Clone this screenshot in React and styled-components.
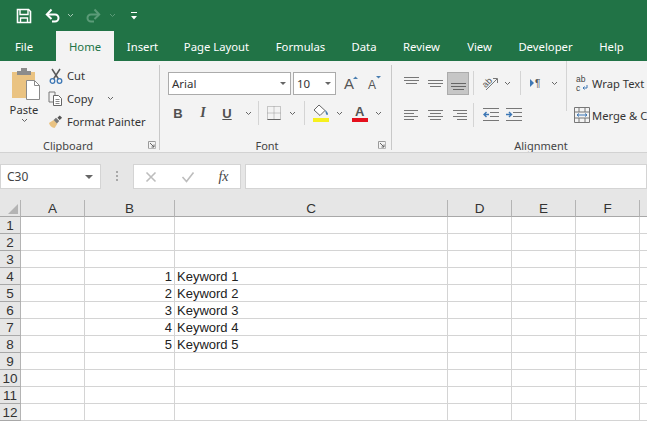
import React from 'react';
import styled, { createGlobalStyle } from 'styled-components';

const GREEN = '#217346';
const FONT = '"Noto Sans", "Open Sans", sans-serif';

const Global = createGlobalStyle`
  html, body { margin: 0; padding: 0; background: #fff; overflow: hidden; }
  body { font-family: ${FONT}; }
`;

const Window = styled.div`
  width: 647px;
  height: 421px;
  overflow: hidden;
  background: #fff;
`;

const TitleBar = styled.div`
  height: 31px;
  background: ${GREEN};
  display: flex;
  align-items: center;
`;

const Slot = styled.span`
  flex: none;
  width: ${p => p.$w}px;
  height: ${p => p.$h || 22}px;
  margin-left: ${p => p.$ml || 0}px;
  display: flex;
  align-items: center;
  justify-content: center;
  background: ${p => p.$active ? '#c6c6c6' : 'transparent'};
  outline: ${p => p.$active ? '1px solid #ababab' : 'none'};
  outline-offset: -1px;
  color: #444;
`;

const TabBar = styled.div`
  height: 30px;
  background: ${GREEN};
  display: flex;
  align-items: stretch;
`;

const Tab = styled.div`
  flex: none;
  width: ${p => p.$w}px;
  margin-right: ${p => p.$mr || 0}px;
  display: flex;
  align-items: center;
  justify-content: center;
  font-size: 11.3px;
  color: ${p => p.$active ? GREEN : '#fff'};
  background: ${p => p.$active ? '#f3f3f3' : 'transparent'};
`;

const Ribbon = styled.div`
  height: 92px;
  box-sizing: border-box;
  padding-top: 4px;
  background: #f3f3f3;
  border-bottom: 1px solid #d2d2d2;
  display: flex;
  overflow: hidden;
`;

const Group = styled.section`
  flex: none;
  width: ${p => p.$w}px;
  height: 85px;
  box-sizing: border-box;
  display: flex;
  flex-direction: column;
  border-right: ${p => p.$open ? 'none' : '1px solid #c8c8c8'};
`;

const GroupBody = styled.div`
  flex: none;
  height: 72px;
  padding-left: ${p => p.$pl || 0}px;
  display: flex;
  flex-direction: ${p => p.$col ? 'column' : 'row'};
`;

const GroupFooter = styled.div`
  flex: none;
  height: 16px;
  display: flex;
  align-items: center;
  color: #444;
  font-size: 11px;
`;

const GroupLabel = styled.span`
  flex: none;
  width: ${p => p.$w}px;
  text-align: center;
`;

const LauncherSlot = styled.span`
  flex: none;
  width: 8px;
  height: 8px;
  display: flex;
  margin-left: ${p => p.$ml}px;
`;

const PasteCol = styled.div`
  flex: none;
  width: 36px;
  margin-left: 6px;
  display: flex;
  flex-direction: column;
  align-items: center;
  color: #333;
  font-size: 11.2px;
  line-height: 16px;
  padding-top: 3px;
`;

const PasteArt = styled.span`
  display: flex;
  margin-left: 4px;
`;

const PasteText = styled.span`
  margin-top: 2px;
`;

const ClipCol = styled.div`
  margin-left: 6px;
  margin-top: -1px;
  display: flex;
  flex-direction: column;
`;

const ClipRow = styled.div`
  height: 23px;
  display: flex;
  align-items: center;
  gap: 4px;
  font-size: 11.2px;
  color: #333;
`;

const Row = styled.div`
  display: flex;
  align-items: center;
  height: ${p => p.$h}px;
  margin-top: ${p => p.$mt || 0}px;
`;

const Select = styled.div`
  flex: none;
  width: ${p => p.$w}px;
  height: 23px;
  box-sizing: border-box;
  margin-left: ${p => p.$ml || 0}px;
  background: #fff;
  border: 1px solid #ababab;
  display: flex;
  align-items: center;
  justify-content: space-between;
  padding: 0 4px 0 3px;
  font-size: 11.5px;
  color: #333;
`;

const Caret = styled.i`
  width: 0;
  height: 0;
  border-left: ${p => p.$s || 3.5}px solid transparent;
  border-right: ${p => p.$s || 3.5}px solid transparent;
  border-top: ${p => p.$s || 3.5}px solid #666;
`;

const Sep = styled.span`
  flex: none;
  width: 1px;
  height: ${p => p.$h || 24}px;
  background: #d4d4d4;
`;

const FontMark = styled.span`
  font-family: ${p => p.$serif ? '"Liberation Serif", serif' : '"Liberation Sans", sans-serif'};
  font-weight: 700;
  font-style: ${p => p.$it ? 'italic' : 'normal'};
  text-decoration: ${p => p.$un ? 'underline' : 'none'};
  font-size: ${p => p.$size || 13}px;
  line-height: 1;
  color: #505050;
`;

const TextAction = styled.div`
  flex: none;
  height: ${p => p.$h}px;
  display: flex;
  align-items: center;
  gap: 1px;
  font-size: 11.2px;
  color: #333;
  white-space: nowrap;
`;

const FormulaBar = styled.div`
  height: 47px;
  box-sizing: border-box;
  padding-top: 11px;
  background: #e6e6e6;
  display: flex;
  align-items: flex-start;
`;

const NameBox = styled.div`
  flex: none;
  width: 101px;
  height: 25px;
  box-sizing: border-box;
  background: #fff;
  border: 1px solid #d4d4d4;
  display: flex;
  align-items: center;
  justify-content: space-between;
  padding: 0 7px 0 6px;
  font-size: 12px;
  color: #444;
`;

const Grip = styled.span`
  flex: none;
  width: 2px;
  height: 10px;
  margin: 7px 15px 0 15px;
  background: repeating-linear-gradient(to bottom, #a8a8a8 0 2px, transparent 2px 4px);
`;

const FxButtons = styled.div`
  flex: none;
  width: 108px;
  height: 25px;
  box-sizing: border-box;
  background: #fff;
  border: 1px solid #d4d4d4;
  display: flex;
  align-items: center;
`;

const FxMark = styled.span`
  font-family: "Liberation Serif", serif;
  font-style: italic;
  font-size: 14px;
  color: #444;
`;

const FormulaInput = styled.div`
  flex: 1;
  height: 25px;
  box-sizing: border-box;
  margin-left: 4px;
  background: #fff;
  border: 1px solid #d4d4d4;
`;

const Sheet = styled.div`
  display: grid;
  grid-template-columns: 21px 64px 90px 273px 64px 64px 64px 64px;
  grid-auto-rows: 17px;
  font-family: "Liberation Sans", Arial, sans-serif;
  font-size: 13px;
  color: #222;
`;

const Cell = styled.div`
  box-sizing: border-box;
  border-right: 1px solid #d4d4d4;
  border-bottom: 1px solid #d4d4d4;
  padding: 0 2px;
  line-height: 18px;
  white-space: nowrap;
  overflow: hidden;
  text-align: ${p => p.$right ? 'right' : 'left'};
`;

const Head = styled.div`
  box-sizing: border-box;
  background: #e6e6e6;
  border-right: 1px solid #b4b4b4;
  border-bottom: 1px solid #a8a8a8;
  font-size: 13.5px;
  line-height: 17px;
  text-align: center;
  color: #333;
  overflow: hidden;
`;

const Corner = styled(Head)`
  position: relative;
  &::after {
    content: '';
    position: absolute;
    right: 2px;
    bottom: 2px;
    border-left: 10px solid transparent;
    border-bottom: 10px solid #b4b4b4;
  }
`;

const Svg = ({ w = 16, h = 16, children, ...rest }) => (
  <svg width={w} height={h} viewBox={`0 0 ${w} ${h}`} fill="none" {...rest}>{children}</svg>
);

const Chevron = ({ color = '#666' }) => (
  <Svg w={7} h={5}><path d="M1 1l2.5 2.5L6 1" stroke={color} strokeWidth="1" /></Svg>
);

const Launcher = ({ ml }) => (
  <LauncherSlot $ml={ml}>
    <Svg w={8} h={8}>
      <path d="M.5 7.500V.5h7" stroke="#9a9a9a" />
      <path d="M7.500 .5v7h-7" stroke="#b5b5b5" />
      <path d="M2 2l4 4M6 3.500V6H3.500" stroke="#666" />
    </Svg>
  </LauncherSlot>
);

const SaveIcon = () => (
  <Svg>
    <path d="M1.500 1.500h11l2 2v11h-13z" stroke="#fff" strokeWidth="1.600" />
    <path d="M4 2v4.500h8V2" stroke="#fff" strokeWidth="1.400" />
    <path d="M4.500 14v-4h7v4" stroke="#fff" strokeWidth="1.400" />
  </Svg>
);

const UndoIcon = ({ color, flip }) => (
  <Svg style={flip ? { transform: 'scaleX(-1)' } : undefined}>
    <path d="M2 6.500h8a3.500 3.500 0 0 1 0 7H7" stroke={color} strokeWidth="2" />
    <path d="M6.500 1.500L1.800 6.500l4.700 4.500" stroke={color} strokeWidth="2" />
  </Svg>
);

const CustomizeIcon = () => (
  <Svg w={8} h={10}>
    <path d="M1 1.500h6" stroke="#fff" />
    <path d="M1 5h6L4 8.500z" fill="#fff" />
  </Svg>
);

const PasteIcon = () => (
  <Svg w={28} h={32}>
    <path d="M0 4h23v26H0z" fill="#eac382" />
    <path d="M5 3h14v4H5z" fill="#8c8c8c" />
    <path d="M9 0h6v4H9z" fill="#8c8c8c" />
    <path d="M14.500 12.500h8l5 5v14h-13z" fill="#fff" stroke="#8a8a8a" />
    <path d="M22.500 12.500v5h5" stroke="#8a8a8a" />
  </Svg>
);

const ScissorsIcon = () => (
  <Svg w={14} h={16}>
    <path d="M3 1l6.500 10M11 1L4.500 11" stroke="#5a5a5a" strokeWidth="1.500" />
    <circle cx="3.500" cy="13" r="2.300" stroke="#3d77b5" strokeWidth="1.300" />
    <circle cx="10.500" cy="13" r="2.300" stroke="#3d77b5" strokeWidth="1.300" />
  </Svg>
);

const CopyIcon = () => (
  <Svg w={15} h={15}>
    <path d="M1 1h6v3M1 1v10h4" stroke="#777" />
    <path d="M5.500 4.500h5l3 3v7h-8z" fill="#fff" stroke="#666" />
    <path d="M7.500 8.500h4M7.500 10.500h4M7.500 12.500h4" stroke="#888" />
  </Svg>
);

const PainterIcon = () => (
  <Svg w={16} h={15}>
    <path d="M1 9l5-3 4 4-3 4.500C4 14 2 12 1 9z" fill="#eac382" />
    <path d="M6 6l2.500-2.500 3.500 3.500-2.500 2.500z" fill="#777" />
    <path d="M10 3.500l2.500-2.500 2.500 2.500L12.500 6z" fill="#555" />
  </Svg>
);

const GrowIcon = ({ up }) => (
  <Svg w={20} h={18}>
    <text x="1" y="14" fontFamily="Liberation Sans, sans-serif" fontSize={up ? 15 : 12} fill="#555">A</text>
    {up
      ? <path d="M10 4l2.500-2.500L15 4z" fill="#4a7eb0" />
      : <path d="M9 1h5l-2.500 2.500z" fill="#4a7eb0" />}
  </Svg>
);

const BorderIcon = () => (
  <Svg w={14} h={14}>
    <path d="M.5.5h13v13H.5zM7 .5v13M.5 7h13" stroke="#999" strokeDasharray="1 1" />
    <path d="M.5 13.500h13" stroke="#666" />
  </Svg>
);

const FillIcon = () => (
  <Svg w={16} h={18}>
    <path d="M6 1l6 5.500-5 5-6-5.500z" fill="#fff" stroke="#666" />
    <path d="M12 6c2 1.500 3 3 3 4s-1.500 1.500-2 0z" fill="#4a7eb0" />
    <path d="M0 14h16v4H0z" fill="#f6f01e" />
  </Svg>
);

const ColorIcon = () => (
  <Svg w={16} h={18}>
    <text x="3" y="12" fontFamily="Liberation Sans, sans-serif" fontWeight="700" fontSize="13" fill="#555">A</text>
    <path d="M0 14h16v4H0z" fill="#e5101c" />
  </Svg>
);

const Lines = ({ rows, w = 15, color = '#777' }) => (
  <Svg w={w} h={14}>
    {rows.map(([y, x1, x2]) => <path key={y} d={`M${x1} ${y}.5H${x2}`} stroke={color} />)}
  </Svg>
);

const OrientIcon = () => (
  <Svg w={19} h={18}>
    <text x="4" y="12" fontFamily="Liberation Sans, sans-serif" fontSize="9" fill="#555" transform="rotate(-45 8 10)">ab</text>
    <path d="M7 16L18 5M14 4.500h4.500V9" stroke="#777" />
  </Svg>
);

const RtlIcon = () => (
  <Svg w={13} h={12}>
    <path d="M0 2l4 4-4 4z" fill="#3d77b5" />
    <text x="5" y="10" fontFamily="Liberation Sans, sans-serif" fontSize="10" fill="#555">¶</text>
  </Svg>
);

const IndentIcon = ({ flip }) => (
  <Svg w={17} h={14}>
    <path d="M1 .5h16M8 4.500h9M8 8.500h9M1 12.500h16" stroke="#777" />
    {flip
      ? <path d="M1 6.500h5M4 4l2.500 2.500L4 9" stroke="#3d77b5" strokeWidth="1.400" />
      : <path d="M2 6.500h5M4.500 4L2 6.500 4.500 9" stroke="#3d77b5" strokeWidth="1.400" />}
  </Svg>
);

const WrapIcon = () => (
  <Svg w={16} h={18}>
    <text x="1" y="8" fontFamily="Liberation Sans, sans-serif" fontSize="8.500" fill="#444">ab</text>
    <text x="1" y="17" fontFamily="Liberation Sans, sans-serif" fontSize="8.500" fill="#444">c</text>
    <path d="M12 11v3H8M9.500 12.500L8 14l1.500 1.500" stroke="#3d77b5" />
  </Svg>
);

const MergeIcon = () => (
  <Svg w={16} h={16}>
    <path d="M.5.5h15v15H.5zM.5 5h15M.5 11h15M5 .5V5M11 .5V5M5 11v4.500M11 11v4.500" stroke="#777" />
    <path d="M3 8h10M5 6.500L3 8l2 1.500M11 6.500L13 8l-2 1.500" stroke="#3d77b5" />
  </Svg>
);

const XIcon = () => (
  <Svg w={12} h={12}><path d="M1.500 1.500l9 9M10.500 1.500l-9 9" stroke="#bdbdbd" strokeWidth="1.600" /></Svg>
);

const CheckIcon = () => (
  <Svg w={14} h={12}><path d="M1.500 6l4 4.500L12.500 1.500" stroke="#bdbdbd" strokeWidth="1.600" /></Svg>
);

const TABS = [
  ['File', 48, 8], ['Home', 58], ['Insert', 57], ['Page Layout', 91], ['Formulas', 77],
  ['Data', 50], ['Review', 65], ['View', 51], ['Developer', 81], ['Help', 51],
];

const COLUMNS = [['A'], ['B'], ['C'], ['D'], ['E'], ['F'], ['']];

const ROWS = { 4: 1, 5: 2, 6: 3, 7: 4, 8: 5 };

const App = () => (
  <Window>
    <Global />
    <TitleBar>
      <Slot $w={16} $ml={16}><SaveIcon /></Slot>
      <Slot $w={16} $ml={13}><UndoIcon color="#fff" /></Slot>
      <Slot $w={8} $ml={5}><Chevron color="#a9cbb8" /></Slot>
      <Slot $w={16} $ml={11}><UndoIcon color="#5b9b78" flip /></Slot>
      <Slot $w={8} $ml={7}><Chevron color="#5b9b78" /></Slot>
      <Slot $w={8} $ml={14}><CustomizeIcon /></Slot>
    </TitleBar>

    <TabBar>
      {TABS.map(([name, w, mr]) => (
        <Tab key={name} $w={w} $mr={mr} $active={name === 'Home'}>{name}</Tab>
      ))}
    </TabBar>

    <Ribbon>
      <Group $w={160}>
        <GroupBody>
          <PasteCol>
            <PasteArt><PasteIcon /></PasteArt>
            <PasteText>Paste</PasteText>
            <Chevron />
          </PasteCol>
          <ClipCol>
            <ClipRow><Slot $w={15}><ScissorsIcon /></Slot>Cut</ClipRow>
            <ClipRow>
              <Slot $w={15}><CopyIcon /></Slot>Copy
              <Slot $w={7} $ml={10}><Chevron /></Slot>
            </ClipRow>
            <ClipRow><Slot $w={15}><PainterIcon /></Slot>Format Painter</ClipRow>
          </ClipCol>
        </GroupBody>
        <GroupFooter>
          <GroupLabel $w={136}>Clipboard</GroupLabel>
          <Launcher ml={12} />
        </GroupFooter>
      </Group>

      <Group $w={232}>
        <GroupBody $col $pl={8}>
          <Row $h={23} $mt={7}>
            <Select $w={123}>Arial<Caret /></Select>
            <Select $w={43} $ml={2}>10<Caret /></Select>
            <Slot $w={22} $ml={6}><GrowIcon up /></Slot>
            <Slot $w={22} $ml={2}><GrowIcon /></Slot>
          </Row>
          <Row $h={22} $mt={7}>
            <Slot $w={20}><FontMark>B</FontMark></Slot>
            <Slot $w={24} $ml={3}><FontMark $it $serif $size={14}>I</FontMark></Slot>
            <Slot $w={22} $ml={1}><FontMark $un>U</FontMark></Slot>
            <Slot $w={8} $ml={6}><Chevron /></Slot>
            <Slot $w={6} />
            <Sep />
            <Slot $w={14} $ml={8}><BorderIcon /></Slot>
            <Slot $w={8} $ml={7}><Chevron /></Slot>
            <Slot $w={8} />
            <Sep />
            <Slot $w={16} $ml={8}><FillIcon /></Slot>
            <Slot $w={8} $ml={6}><Chevron /></Slot>
            <Slot $w={16} $ml={9}><ColorIcon /></Slot>
            <Slot $w={8} $ml={6}><Chevron /></Slot>
          </Row>
        </GroupBody>
        <GroupFooter>
          <GroupLabel $w={214}>Font</GroupLabel>
          <Launcher ml={4} />
        </GroupFooter>
      </Group>

      <Group $w={255} $open>
        <GroupBody $col>
          <Row $h={24} $mt={6}>
            <Slot $w={24} $ml={7}><Lines rows={[[1, 0, 15], [4, 0, 15], [7, 2, 13]]} /></Slot>
            <Slot $w={24}><Lines rows={[[4, 0, 15], [7, 0, 15], [10, 2, 13]]} /></Slot>
            <Slot $w={22} $h={23} $active><Lines rows={[[7, 0, 15], [10, 0, 15], [13, 2, 13]]} color="#666" /></Slot>
            <Slot $w={4} />
            <Sep />
            <Slot $w={19} $ml={5}><OrientIcon /></Slot>
            <Slot $w={8} $ml={5}><Chevron /></Slot>
            <Slot $w={9} />
            <Sep />
            <Slot $w={13} $ml={9}><RtlIcon /></Slot>
            <Slot $w={8} $ml={7}><Chevron /></Slot>
            <Slot $w={8} />
            <Sep $h={56} />
            <TextAction $h={24}>
              <Slot $w={17} $ml={7}><WrapIcon /></Slot>
              Wrap Text
            </TextAction>
          </Row>
          <Row $h={24} $mt={8}>
            <Slot $w={24} $ml={7}><Lines rows={[[2, 0, 14], [5, 0, 10], [8, 0, 14], [11, 0, 10]]} /></Slot>
            <Slot $w={24}><Lines rows={[[2, 0, 15], [5, 2, 13], [8, 0, 15], [11, 2, 13]]} /></Slot>
            <Slot $w={24}><Lines rows={[[2, 1, 15], [5, 5, 15], [8, 1, 15], [11, 5, 15]]} /></Slot>
            <Slot $w={2} />
            <Sep />
            <Slot $w={17} $ml={8}><IndentIcon /></Slot>
            <Slot $w={17} $ml={6}><IndentIcon flip /></Slot>
            <Slot $w={44} />
            <TextAction $h={24}>
              <Slot $w={18} $ml={7}><MergeIcon /></Slot>
              Merge &amp; Center
            </TextAction>
          </Row>
        </GroupBody>
        <GroupFooter>
          <GroupLabel $w={298}>Alignment</GroupLabel>
        </GroupFooter>
      </Group>
    </Ribbon>

    <FormulaBar>
      <NameBox>C30<Caret $s={4} /></NameBox>
      <Grip />
      <FxButtons>
        <Slot $w={34} $h={23}><XIcon /></Slot>
        <Slot $w={39} $h={23}><CheckIcon /></Slot>
        <Slot $w={33} $h={23}><FxMark>fx</FxMark></Slot>
      </FxButtons>
      <FormulaInput />
    </FormulaBar>

    <Sheet>
      <Corner />
      {COLUMNS.map(([name], i) => <Head key={i}>{name}</Head>)}
      {Array.from({ length: 12 }, (_, i) => i + 1).flatMap(row => [
        <Head key={`h${row}`}>{row}</Head>,
        <Cell key={`a${row}`} />,
        <Cell key={`b${row}`} $right>{ROWS[row]}</Cell>,
        <Cell key={`c${row}`}>{ROWS[row] ? `Keyword ${ROWS[row]}` : ''}</Cell>,
        <Cell key={`d${row}`} />,
        <Cell key={`e${row}`} />,
        <Cell key={`f${row}`} />,
        <Cell key={`g${row}`} />,
      ])}
    </Sheet>
  </Window>
);

export default App;
